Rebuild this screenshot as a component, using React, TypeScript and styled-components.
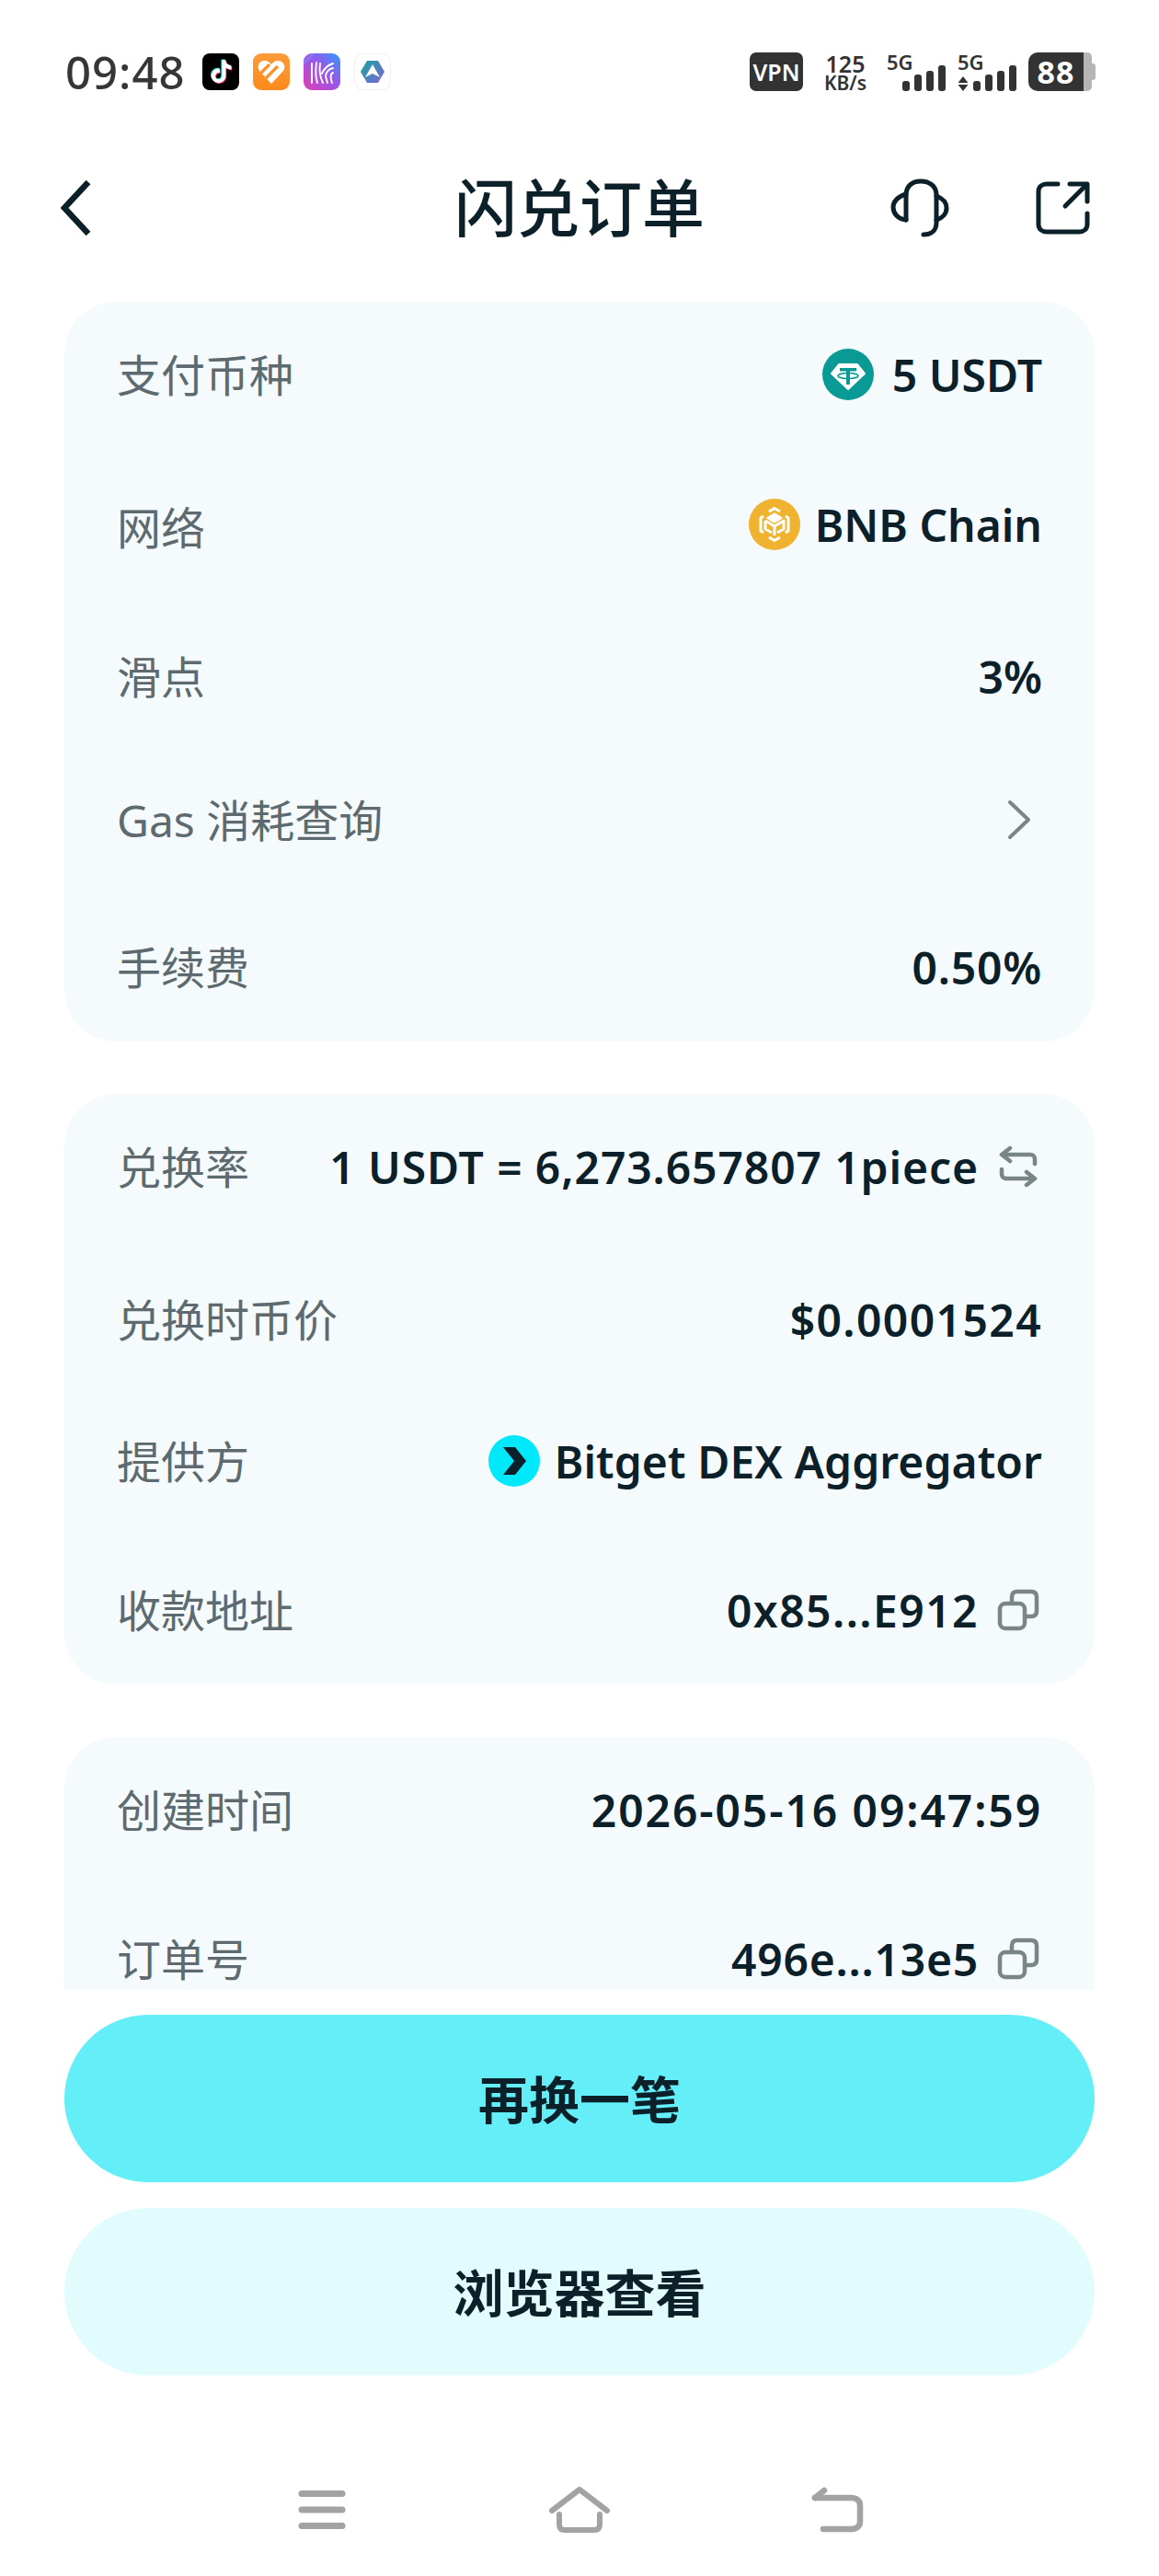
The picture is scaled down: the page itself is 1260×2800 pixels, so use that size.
import React from 'react';
import styled, { createGlobalStyle } from 'styled-components';

const GlobalStyle = createGlobalStyle`
  html, body {
    margin: 0;
    padding: 0;
    background: #ffffff;
  }
  * {
    box-sizing: border-box;
  }
`;

const Page = styled.div`
  width: 1260px;
  height: 2800px;
  overflow: hidden;
  background: #ffffff;
  font-family: "Noto Sans", "Noto Sans CJK SC", sans-serif;
  color: #0b2029;
`;

const StatusBar = styled.div`
  display: flex;
  justify-content: space-between;
  align-items: center;
  height: 42px;
  margin-top: 57px;
  padding: 0 68px 0 71px;
`;

const StatusLeft = styled.div`
  display: flex;
  align-items: center;
`;

const Time = styled.span`
  width: 149px;
  font-size: 49px;
  font-weight: 500;
  line-height: 42px;
  letter-spacing: 1px;
  color: #363636;
`;

const AppIcons = styled.div`
  display: flex;
  gap: 15px;
`;

const StatusRight = styled.div`
  display: flex;
  align-items: center;
  height: 42px;
`;

const VpnBadge = styled.span`
  display: flex;
  align-items: center;
  justify-content: center;
  width: 58px;
  height: 42px;
  border-radius: 7px;
  background: #333333;
  color: #ffffff;
  font-size: 25px;
  font-weight: 600;
`;

const Speed = styled.div`
  display: flex;
  flex-direction: column;
  align-items: center;
  width: 50px;
  margin: 0 20px 0 21px;
  color: #333333;
  font-weight: 600;
`;

const SpeedValue = styled.span`
  font-size: 25px;
  line-height: 24px;
`;

const SpeedUnit = styled.span`
  font-size: 21px;
  line-height: 18px;
  white-space: nowrap;
`;

const Signal = styled.div`
  position: relative;
  width: 64px;
  height: 42px;
  margin-right: 13px;
`;

const SignalLabel = styled.span`
  position: absolute;
  top: 0;
  left: 0;
  font-size: 22px;
  line-height: 20px;
  font-weight: 600;
  color: #333333;
`;

const Battery = styled.div`
  display: flex;
  align-items: center;
  width: 74px;
  height: 42px;
`;

const BatteryBody = styled.div`
  display: flex;
  align-items: center;
  justify-content: center;
  width: 69px;
  height: 42px;
  padding-right: 9px;
  border-radius: 10px 5px 5px 10px;
  background: linear-gradient(90deg, #333333 0 60px, #b6b6b6 60px);
  color: #ffffff;
  font-size: 34px;
  font-weight: 700;
  letter-spacing: 1px;
`;

const BatteryNub = styled.div`
  width: 4px;
  height: 18px;
  border-radius: 0 3px 3px 0;
  background: #b6b6b6;
`;

const Header = styled.div`
  display: grid;
  grid-template-columns: 1fr auto 1fr;
  align-items: center;
  height: 110px;
  margin: 72px 0 47px;
  padding: 0 74px 0 64px;
`;

const Title = styled.h1`
  margin: 0 0 0 10px;
  font-size: 68px;
  font-weight: 500;
  line-height: 90px;
  color: #0b2029;
`;

const HeaderActions = styled.div`
  display: flex;
  justify-content: flex-end;
  align-items: center;
  gap: 94px;
`;

const Scroller = styled.div`
  display: flex;
  flex-direction: column;
  gap: 57px;
  height: 1835px;
  padding: 0 70px;
  overflow: hidden;
`;

const Card = styled.section`
  flex: none;
  display: flex;
  flex-direction: column;
  padding: 39px 57px 41px;
  border-radius: 56px;
  background: #f5fafc;
`;

const Row = styled.div<{ $gap?: number }>`
  display: flex;
  justify-content: space-between;
  align-items: center;
  height: 80px;
  margin-top: ${props => props.$gap || 0}px;
`;

const Label = styled.span`
  padding-bottom: 5px;
  font-size: 48px;
  color: #5d6a6f;
  white-space: nowrap;
`;

const Value = styled.div<{ $gap?: number; $track?: number; $lift?: number }>`
  display: flex;
  align-items: center;
  gap: ${props => props.$gap || 20}px;
  padding-bottom: ${props => props.$lift || 0}px;
  font-size: 48px;
  font-weight: 600;
  letter-spacing: ${props => props.$track || 0}px;
  color: #0b2029;
  white-space: nowrap;
`;

const RowIcon = styled.span`
  display: block;
  margin-right: 3px;
`;

const ChevronSlot = styled.span`
  display: block;
  margin-right: 11px;
`;

const Actions = styled.div`
  display: flex;
  flex-direction: column;
  gap: 28px;
  padding: 27px 70px 0;
`;

const ActionButton = styled.button<{ $light?: boolean }>`
  width: 1120px;
  height: 182px;
  padding: 0 0 5px;
  border: none;
  border-radius: 91px;
  background: ${props => (props.$light ? '#e2fbfd' : '#64eff8')};
  color: #0b2029;
  font-family: inherit;
  font-size: 55px;
  font-weight: 700;
`;

const NavBar = styled.div`
  display: grid;
  grid-template-columns: repeat(3, 280px);
  justify-content: center;
  justify-items: center;
  align-items: center;
  height: 60px;
  margin-top: 116px;
`;

const Svg = styled.svg`
  display: block;
  flex: none;
`;

const TikTokPath =
  'M12.525.02c1.31-.02 2.61-.01 3.91-.02.08 1.53.63 3.09 1.75 4.17 1.12 1.11 2.7 1.62 4.24 1.79v4.03c-1.44-.05-2.89-.35-4.2-.97-.57-.26-1.1-.59-1.62-.93-.01 2.92.01 5.84-.02 8.75-.08 1.4-.54 2.79-1.35 3.94-1.31 1.92-3.58 3.17-5.91 3.21-1.43.08-2.86-.31-4.08-1.03-2.02-1.19-3.44-3.37-3.65-5.71-.02-.5-.03-1-.01-1.49.18-1.9 1.12-3.72 2.58-4.96 1.66-1.44 3.98-2.13 6.15-1.72.02 1.48-.04 2.96-.04 4.44-.99-.32-2.15-.23-3.02.37-.63.41-1.11 1.04-1.36 1.75-.21.51-.15 1.07-.14 1.61.24 1.64 1.82 3.02 3.5 2.87 1.12-.01 2.19-.66 2.77-1.61.19-.33.4-.67.41-1.06.1-1.79.06-3.57.07-5.36.01-4.03-.01-8.05.02-12.07z';

const TikTokIcon = () => (
  <Svg width="40" height="40" viewBox="0 0 40 40">
    <rect width="40" height="40" rx="8" fill="#000" />
    <path d={TikTokPath} fill="#25f4ee" transform="translate(7.4 6.4) scale(1.04)" />
    <path d={TikTokPath} fill="#fe2c55" transform="translate(9 8) scale(1.04)" />
    <path d={TikTokPath} fill="#fff" transform="translate(8.2 7.2) scale(1.04)" />
  </Svg>
);

const HeartAppIcon = () => (
  <Svg width="40" height="40" viewBox="0 0 40 40">
    <defs>
      <linearGradient id="heartBg" x1="0" y1="0" x2="0" y2="1">
        <stop offset="0" stopColor="#fb9b3a" />
        <stop offset="1" stopColor="#fd8a1c" />
      </linearGradient>
    </defs>
    <rect width="40" height="40" rx="9" fill="url(#heartBg)" />
    <path d="M20 33 L7 19 C3 13 8 7 13.5 8 C16.5 8.5 18.5 10 20 12 C21.5 10 24 8 27 8 C33 8 36.5 14 33 19 Z" fill="#fff" />
    <path d="M8 22 L18 12 M14 27 L27 14" stroke="#fc9228" strokeWidth="3.2" />
  </Svg>
);

const ProAppIcon = () => (
  <Svg width="40" height="40" viewBox="0 0 40 40">
    <defs>
      <linearGradient id="proBg" x1="0" y1="1" x2="1" y2="0">
        <stop offset="0" stopColor="#de3fb0" />
        <stop offset="0.55" stopColor="#9a55ee" />
        <stop offset="1" stopColor="#2f9bfb" />
      </linearGradient>
    </defs>
    <rect width="40" height="40" rx="9" fill="url(#proBg)" />
    <path d="M0 9 L9 0 H13 L0 13 Z" fill="#7f7bf0" />
    <g fill="none" stroke="#fff" strokeWidth="1.9" strokeLinecap="round">
      <path d="M9 11 V32" />
      <path d="M14 10 C13 18 13 26 15 32" />
      <path d="M18 11 C17 18 18 26 21 32" />
      <path d="M32 11 C26 13 22 17 20 22" />
      <path d="M32 16 C27 17 24 21 24 25 L26 32" />
      <path d="M32 21 C29 22 29 27 31 32" />
    </g>
  </Svg>
);

const HexAppIcon = () => (
  <Svg width="40" height="40" viewBox="0 0 40 40">
    <defs>
      <linearGradient id="hexBg" x1="0" y1="0" x2="1" y2="1">
        <stop offset="0" stopColor="#1aa39c" />
        <stop offset="1" stopColor="#7d66d6" />
      </linearGradient>
    </defs>
    <rect x="0.5" y="0.5" width="39" height="39" rx="9" fill="#fff" stroke="#f0f0f0" />
    <path d="M14 8 H26 L33 20 L26 32 H14 L7 20 Z" fill="url(#hexBg)" strokeLinejoin="round" />
    <path d="M20 12 L28 26 L20 22 L12 26 Z" fill="#fff" />
  </Svg>
);

const SignalBars = ({ arrows }: { arrows?: boolean }) => (
  <Svg width="64" height="42" viewBox="0 0 64 42">
    <g fill="#333">
      <rect x="17" y="31" width="8" height="11" rx="3" />
      <rect x="30" y="24" width="8" height="18" rx="3" />
      <rect x="43" y="20" width="8" height="22" rx="3" />
      <rect x="56" y="14" width="8" height="28" rx="3" />
      {arrows && <path d="M6 26 L11.500 33 H0.500 Z M0.500 35 H11.500 L6 42 Z" />}
    </g>
  </Svg>
);

const BackIcon = () => (
  <Svg width="36" height="62" viewBox="0 0 36 62">
    <path d="M32 3 L6 31 L32 59" fill="none" stroke="#0b2029" strokeWidth="6.500" />
  </Svg>
);

const HeadsetIcon = () => (
  <Svg width="64" height="64" viewBox="0 0 64 64">
    <g fill="none" stroke="#0b2029" strokeWidth="5" strokeLinecap="round">
      <path d="M17 45 V18 C17 8 24 3 33 3 C42 3 50 8 50 18 V48 C50 56 45 61 36 61" />
      <path d="M17 17 C7 20 3 26 3 31 C3 38 8 44 17 45" />
      <path d="M50 19 C58 22 61 26 61 32 C61 38 57 43 50 45" />
    </g>
  </Svg>
);

const ExternalIcon = () => (
  <Svg width="60" height="60" viewBox="0 0 60 60">
    <g fill="none" stroke="#0b2029" strokeWidth="5" strokeLinecap="round" strokeLinejoin="round">
      <path d="M24 4 H12 C7 4 3 7 3 12 V48 C3 53 7 56 12 56 H47 C52 56 56 53 56 48 V36" />
      <path d="M32 28 L55 5" />
      <path d="M37 4 H56 V23" />
    </g>
  </Svg>
);

const TetherCoin = () => (
  <Svg width="56" height="56" viewBox="0 0 56 56">
    <circle cx="28" cy="28" r="28" fill="#0a9a96" />
    <path d="M18 17 H38 L46 27 L28 44 L10 27 Z" fill="#fff" stroke="#fff" strokeWidth="2" strokeLinejoin="round" />
    <path d="M19 21 H37 V24.500 H30 V39 H26 V24.500 H19 Z" fill="#0a9a96" />
    <ellipse cx="28" cy="29.500" rx="11" ry="3" fill="none" stroke="#0a9a96" strokeWidth="1.600" />
  </Svg>
);

const BnbCoin = () => (
  <Svg width="56" height="56" viewBox="0 0 56 56">
    <circle cx="28" cy="28" r="28" fill="#f0b32f" />
    <g fill="none" stroke="#fff" strokeWidth="3" strokeLinejoin="round">
      <path d="M22 14 L28 10.500 L34 14 M40 19 L43 21 V35 L40 37 M34 42 L28 45.500 L22 42 M16 37 L13 35 V21 L16 19" />
      <path d="M28 17 L35 21 L28 25 L21 21 Z" fill="#fff" />
      <path d="M18 24 L28 30 L38 24 V33 L31 37 M18 24 V33 L25 37 M28 30 V40" />
    </g>
  </Svg>
);

const BitgetCoin = () => (
  <Svg width="56" height="56" viewBox="0 0 56 56">
    <circle cx="28" cy="28" r="28" fill="#00e9fb" />
    <path d="M16 13 H29 L41 28 L29 43 H16 L28 28 Z" fill="#0b2029" />
  </Svg>
);

const ChevronRight = () => (
  <Svg width="28" height="44" viewBox="0 0 28 44">
    <path d="M4 3 L24 22 L4 41" fill="none" stroke="#7a8588" strokeWidth="4" strokeLinecap="round" strokeLinejoin="round" />
  </Svg>
);

const SwapIcon = () => (
  <Svg width="46" height="44" viewBox="0 0 46 44">
    <g fill="none" stroke="#7a8588" strokeWidth="4.500" strokeLinecap="round" strokeLinejoin="round">
      <path d="M41 19 V14 C41 11 39 9 36 9 H6" />
      <path d="M14 2 L5 9 L14 16" />
      <path d="M5 25 V30 C5 33 7 35 10 35 H40" />
      <path d="M32 28 L41 35 L32 42" />
    </g>
  </Svg>
);

const CopyIcon = () => (
  <Svg width="46" height="46" viewBox="0 0 46 46">
    <g fill="none" stroke="#7a8588" strokeWidth="4.500" strokeLinejoin="round">
      <rect x="3" y="16" width="27" height="27" rx="6" />
      <path d="M16 16 V9 C16 5 18 3 22 3 H37 C41 3 43 5 43 9 V24 C43 28 41 30 37 30 H30" />
    </g>
  </Svg>
);

const MenuKey = () => (
  <Svg width="52" height="44" viewBox="0 0 52 44">
    <g stroke="#a3a3a3" strokeWidth="7" strokeLinecap="round">
      <path d="M4 4.500 H48" />
      <path d="M4 22 H48" />
      <path d="M4 39.500 H48" />
    </g>
  </Svg>
);

const HomeKey = () => (
  <Svg width="66" height="50" viewBox="0 0 66 50">
    <g fill="none" stroke="#a3a3a3" strokeWidth="6" strokeLinecap="round" strokeLinejoin="round">
      <path d="M3 26 L33 3 L63 26" />
      <path d="M11 30 V41 C11 45 13 47 17 47 H49 C53 47 55 45 55 41 V30" />
    </g>
  </Svg>
);

const ReturnKey = () => (
  <Svg width="58" height="50" viewBox="0 0 58 50">
    <g fill="none" stroke="#a3a3a3" strokeWidth="6.500" strokeLinecap="round" strokeLinejoin="round">
      <path d="M5 12 H44 C50 12 54 15 54 20 V38 C54 43 50 46 44 46 H14" />
      <path d="M5 12 L15 4" />
    </g>
  </Svg>
);

export default function App() {
  return (
    <Page>
      <GlobalStyle />
      <StatusBar>
        <StatusLeft>
          <Time>09:48</Time>
          <AppIcons>
            <TikTokIcon />
            <HeartAppIcon />
            <ProAppIcon />
            <HexAppIcon />
          </AppIcons>
        </StatusLeft>
        <StatusRight>
          <VpnBadge>VPN</VpnBadge>
          <Speed>
            <SpeedValue>125</SpeedValue>
            <SpeedUnit>KB/s</SpeedUnit>
          </Speed>
          <Signal>
            <SignalBars />
            <SignalLabel>5G</SignalLabel>
          </Signal>
          <Signal>
            <SignalBars arrows />
            <SignalLabel>5G</SignalLabel>
          </Signal>
          <Battery>
            <BatteryBody>88</BatteryBody>
            <BatteryNub />
          </Battery>
        </StatusRight>
      </StatusBar>

      <Header>
        <BackIcon />
        <Title>闪兑订单</Title>
        <HeaderActions>
          <HeadsetIcon />
          <ExternalIcon />
        </HeaderActions>
      </Header>

      <Scroller>
        <Card>
          <Row>
            <Label>支付币种</Label>
            <Value>
              <TetherCoin />
              5 USDT
            </Value>
          </Row>
          <Row $gap={86}>
            <Label>网络</Label>
            <Value $gap={16} $lift={6}>
              <BnbCoin />
              BNB Chain
            </Value>
          </Row>
          <Row $gap={82}>
            <Label>滑点</Label>
            <Value>3%</Value>
          </Row>
          <Row $gap={76}>
            <Label>Gas 消耗查询</Label>
            <ChevronSlot>
              <ChevronRight />
            </ChevronSlot>
          </Row>
          <Row $gap={80}>
            <Label>手续费</Label>
            <Value $track={0.8}>0.50%</Value>
          </Row>
        </Card>

        <Card>
          <Row>
            <Label>兑换率</Label>
            <Value $track={0.9}>
              1 USDT = 6,273.657807 1piece
              <RowIcon>
                <SwapIcon />
              </RowIcon>
            </Value>
          </Row>
          <Row $gap={86}>
            <Label>兑换时币价</Label>
            <Value $track={1.4}>$0.0001524</Value>
          </Row>
          <Row $gap={74}>
            <Label>提供方</Label>
            <Value $gap={16} $track={0.1}>
              <BitgetCoin />
              Bitget DEX Aggregator
            </Value>
          </Row>
          <Row $gap={82}>
            <Label>收款地址</Label>
            <Value $track={1.45}>
              0x85...E912
              <RowIcon>
                <CopyIcon />
              </RowIcon>
            </Value>
          </Row>
        </Card>

        <Card>
          <Row>
            <Label>创建时间</Label>
            <Value $track={1.9}>2026-05-16 09:47:59</Value>
          </Row>
          <Row $gap={82}>
            <Label>订单号</Label>
            <Value $track={0.75}>
              496e...13e5
              <RowIcon>
                <CopyIcon />
              </RowIcon>
            </Value>
          </Row>
        </Card>
      </Scroller>

      <Actions>
        <ActionButton>再换一笔</ActionButton>
        <ActionButton $light>浏览器查看</ActionButton>
      </Actions>

      <NavBar>
        <MenuKey />
        <HomeKey />
        <ReturnKey />
      </NavBar>
    </Page>
  );
}
